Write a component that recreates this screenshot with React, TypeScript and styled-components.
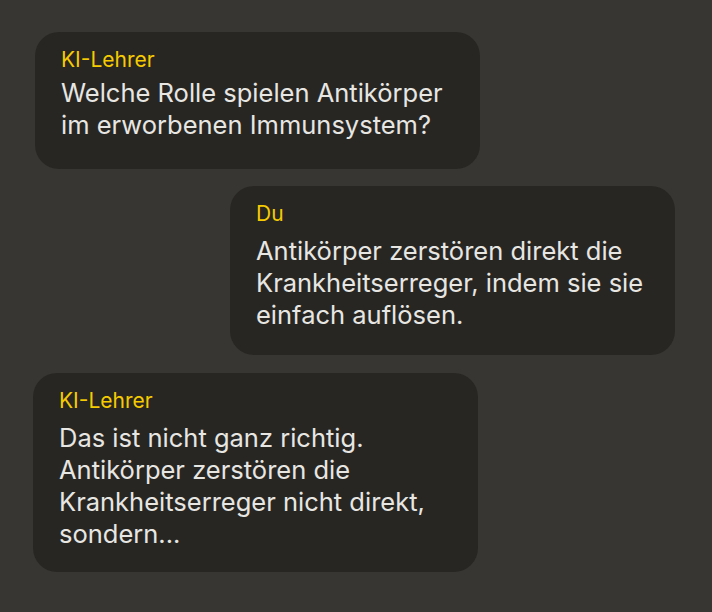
import React from "react";
import styled, { createGlobalStyle } from "styled-components";

const GlobalStyle = createGlobalStyle`
  html, body {
    margin: 0;
    padding: 0;
    background: #373632;
  }
  body {
    font-family: Inter, "Noto Sans", sans-serif;
    -webkit-font-smoothing: antialiased;
  }
`;

const Page = styled.div`
  width: 712px;
  height: 612px;
  box-sizing: border-box;
  padding-top: 32px;
  display: flex;
  flex-direction: column;
  gap: 17px;
  background: #373632;
`;

const Bubble = styled.div<{ $left: number; $pb: number; $mt: number }>`
  width: 445px;
  box-sizing: border-box;
  margin-left: ${(p) => p.$left}px;
  margin-top: ${(p) => p.$mt}px;
  background: #272623;
  border-radius: 24px;
  padding: 16px 25px ${(p) => p.$pb}px 26px;
  display: flex;
  flex-direction: column;
`;

const Label = styled.div<{ $gap: number }>`
  color: #f6cb00;
  font-size: 21px;
  line-height: 24px;
  margin-bottom: ${(p) => p.$gap}px;
`;

const Body = styled.div`
  color: #e7e6e3;
  font-size: 25.5px;
  line-height: 32px;
`;

const messages = [
  {
    who: "KI-Lehrer",
    left: 35,
    gap: 5,
    pb: 28,
    mt: 0,
    text: "Welche Rolle spielen Antikörper im erworbenen Immunsystem?",
  },
  {
    who: "Du",
    left: 230,
    gap: 9,
    pb: 24,
    mt: 0,
    text: "Antikörper zerstören direkt die Krankheitserreger, indem sie sie einfach auflösen.",
  },
  {
    who: "KI-Lehrer",
    left: 33,
    gap: 9,
    pb: 22,
    mt: 1,
    text: "Das ist nicht ganz richtig. Antikörper zerstören die Krankheitserreger nicht direkt, sondern...",
  },
];

export default function App() {
  return (
    <>
      <GlobalStyle />
      <Page>
        {messages.map((m, i) => (
          <Bubble key={i} $left={m.left} $pb={m.pb} $mt={m.mt}>
            <Label $gap={m.gap}>{m.who}</Label>
            <Body>{m.text}</Body>
          </Bubble>
        ))}
      </Page>
    </>
  );
}
